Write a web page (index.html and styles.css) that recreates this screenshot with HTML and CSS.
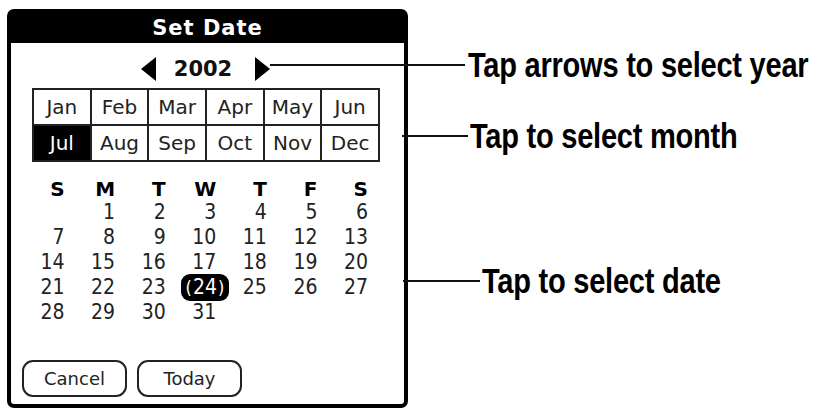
FILE: index.html
```html
<!DOCTYPE html>
<html>
<head>
<meta charset="utf-8">
<title>Set Date</title>
<link rel="stylesheet" href="styles.css">
</head>
<body>
<div class="page">
  <div class="dialog">
    <div class="title">Set Date</div>
    <div class="year-row">
      <svg class="arrow arrow-left" width="15" height="24" viewBox="0 0 15 24"><polygon points="15,0 0,12 15,24"/></svg>
      <span class="year">2002</span>
      <svg class="arrow arrow-right" width="15" height="24" viewBox="0 0 15 24"><polygon points="0,0 15,12 0,24"/></svg>
    </div>
    <div class="months">
      <div class="month">Jan</div>
      <div class="month">Feb</div>
      <div class="month">Mar</div>
      <div class="month">Apr</div>
      <div class="month">May</div>
      <div class="month">Jun</div>
      <div class="month month-sel">Jul</div>
      <div class="month">Aug</div>
      <div class="month">Sep</div>
      <div class="month">Oct</div>
      <div class="month">Nov</div>
      <div class="month">Dec</div>
    </div>
    <div class="cal">
      <div class="head">S</div><div class="head">M</div><div class="head">T</div><div class="head">W</div><div class="head">T</div><div class="head">F</div><div class="head">S</div>
      <div class="day"></div><div class="day">1</div><div class="day">2</div><div class="day">3</div><div class="day">4</div><div class="day">5</div><div class="day">6</div>
      <div class="day">7</div><div class="day">8</div><div class="day">9</div><div class="day">10</div><div class="day">11</div><div class="day">12</div><div class="day">13</div>
      <div class="day">14</div><div class="day">15</div><div class="day">16</div><div class="day">17</div><div class="day">18</div><div class="day">19</div><div class="day">20</div>
      <div class="day">21</div><div class="day">22</div><div class="day">23</div><div class="day"><span class="sel">24</span></div><div class="day">25</div><div class="day">26</div><div class="day">27</div>
      <div class="day">28</div><div class="day">29</div><div class="day">30</div><div class="day">31</div><div class="day"></div><div class="day"></div><div class="day"></div>
    </div>
    <div class="buttons">
      <button class="btn">Cancel</button>
      <button class="btn">Today</button>
    </div>
  </div>
  <div class="callouts">
    <div class="callout callout-year"><span class="line"></span><span class="label">Tap arrows to select year</span></div>
    <div class="callout callout-month"><span class="line"></span><span class="label">Tap to select month</span></div>
    <div class="callout callout-date"><span class="line"></span><span class="label">Tap to select date</span></div>
  </div>
</div>
</body>
</html>
```
FILE: styles.css
```css
html, body {
  margin: 0;
  padding: 0;
  background: #fff;
  overflow: hidden;
}

.page {
  width: 820px;
  height: 412px;
  display: flex;
  align-items: flex-start;
  padding: 9px 0 0 7px;
  box-sizing: border-box;
  font-family: "DejaVu Sans", "Liberation Sans", sans-serif;
}

.dialog {
  flex: none;
  width: 401px;
  height: 399px;
  box-sizing: border-box;
  border: 4px solid #000;
  border-radius: 7px;
  background: #fff;
  display: flex;
  flex-direction: column;
}

.title {
  height: 30px;
  background: #000;
  color: #fff;
  font-weight: bold;
  font-size: 21px;
  letter-spacing: 1px;
  line-height: 30px;
  text-align: center;
}

.year-row {
  margin-top: 14px;
  height: 24px;
  display: flex;
  align-items: center;
  justify-content: center;
  padding-right: 4px;
}

.arrow {
  display: block;
  fill: #000;
}

.year {
  margin: 0 23px 0 18px;
  font-weight: bold;
  font-size: 21px;
  line-height: 24px;
  color: #111;
}

.months {
  margin: 7px 0 0 21px;
  width: 348px;
  height: 74px;
  box-sizing: border-box;
  padding: 2px;
  background: #222;
  display: grid;
  grid-template-columns: repeat(6, 1fr);
  grid-template-rows: repeat(2, 1fr);
  gap: 2px;
}

.month {
  background: #fff;
  color: #222;
  font-size: 20px;
  display: flex;
  align-items: center;
  justify-content: center;
}

.month-sel {
  background: #000;
  color: #fff;
}

.cal {
  margin: 16px 0 0 3px;
  width: 354px;
  display: grid;
  grid-template-columns: repeat(7, 1fr);
  grid-template-rows: 22px repeat(5, 25px);
}

.head {
  text-align: right;
  font-weight: bold;
  font-size: 20px;
  line-height: 22px;
  color: #000;
}

.day {
  text-align: right;
  font-family: "DejaVu Sans Condensed", "Liberation Sans", sans-serif;
  font-size: 21px;
  line-height: 25px;
  color: #222;
}

.sel {
  display: inline-block;
  background: #000;
  color: #fff;
  border-radius: 9px;
  padding: 1px 5px 1px 5px;
  margin: -1px -13px -1px -5px;
}

.sel::before {
  content: "(";
  font-size: 18px;
  margin-right: 1px;
}

.sel::after {
  content: ")";
  font-size: 18px;
  margin-left: 1px;
}

.buttons {
  margin-top: auto;
  padding: 0 0 7px 11px;
  display: flex;
  gap: 10px;
}

.btn {
  width: 105px;
  height: 37px;
  box-sizing: border-box;
  border: 2px solid #222;
  border-radius: 11px;
  background: #fff;
  color: #222;
  font-family: "DejaVu Sans", "Liberation Sans", sans-serif;
  font-size: 18px;
  padding: 0;
}

.callouts {
  margin: 36px 0 0 -5px;
  display: flex;
  flex-direction: column;
}

.callout {
  display: flex;
  align-items: center;
  height: 40px;
}

.line {
  display: block;
  flex: none;
  height: 2px;
  background: #111;
}

.label {
  display: block;
  flex: none;
  width: 345px;
  font-family: "Liberation Sans", Arial, sans-serif;
  font-weight: bold;
  font-size: 35px;
  line-height: 40px;
  letter-spacing: -0.3px;
  color: #000;
  white-space: nowrap;
  transform: scaleX(0.83);
  transform-origin: left center;
}

.callout-year .line {
  width: 195px;
  margin: 0 3px 0 -133px;
}

.callout-month {
  margin-top: 31px;
}

.callout-month .line {
  width: 66px;
  margin-right: 2px;
  margin-left: -1px;
}

.callout-date {
  margin-top: 105px;
}

.callout-date .line {
  width: 77px;
  margin-right: 2px;
}
```
